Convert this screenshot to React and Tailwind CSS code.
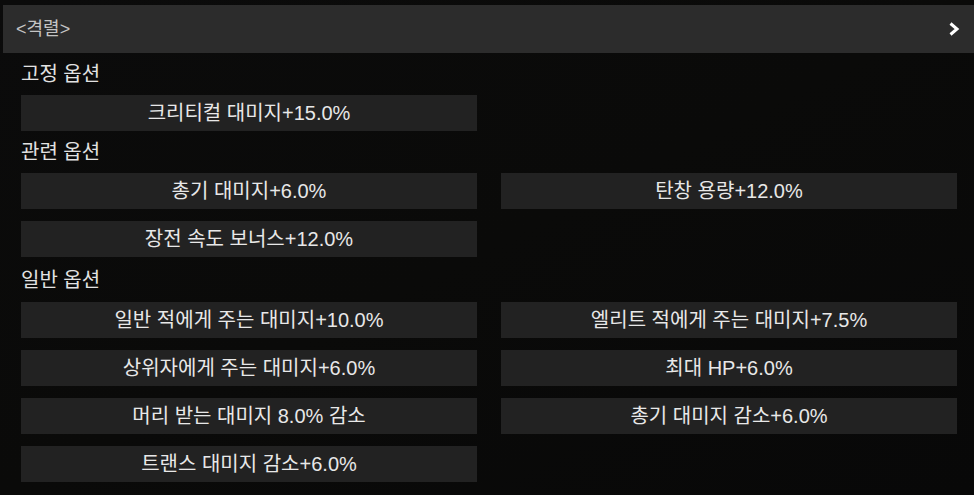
import React from 'react';

const fixedOptions = ['크리티컬 대미지+15.0%'];
const relatedOptions = ['총기 대미지+6.0%', '탄창 용량+12.0%', '장전 속도 보너스+12.0%'];
const normalOptions = [
  '일반 적에게 주는 대미지+10.0%',
  '엘리트 적에게 주는 대미지+7.5%',
  '상위자에게 주는 대미지+6.0%',
  '최대 HP+6.0%',
  '머리 받는 대미지 8.0% 감소',
  '총기 대미지 감소+6.0%',
  '트랜스 대미지 감소+6.0%',
];

const Section = ({ title, items, labelClass }) => (
  <div>
    <div className={`flex items-center text-[20px] text-[#e2e2e2] ${labelClass}`}>{title}</div>
    <div className="grid grid-cols-[456px_456px] gap-x-[24px] gap-y-[12px]">
      {items.map((text) => (
        <div
          key={text}
          className="h-[36px] flex items-center justify-center bg-[#222222] text-[20px] text-[#e8e8e8]"
        >
          {text}
        </div>
      ))}
    </div>
  </div>
);

export default function App() {
  return (
    <div
      className="w-[974px] h-[495px] overflow-hidden bg-gradient-to-br from-[#0b0b0b] via-[#0a0a09] to-[#080808] pt-[5px] pl-[3px]"
      style={{ fontFamily: '"Liberation Sans", "Noto Sans CJK KR", sans-serif' }}
    >
      <div className="h-[48px] flex items-center justify-between bg-[#2c2c2c] pl-[13px] pr-[14px]">
        <span className="text-[18px] text-[#c4c4c4]">&lt;격렬&gt;</span>
        <svg width="12" height="16" viewBox="0 0 12 16" fill="none">
          <path d="M2.5 2.5 L9 8 L2.5 13.5" stroke="#ffffff" strokeWidth="3" strokeLinejoin="miter" />
        </svg>
      </div>
      <div className="pl-[18px]">
        <Section title="고정 옵션" items={fixedOptions} labelClass="h-[42px]" />
        <Section title="관련 옵션" items={relatedOptions} labelClass="h-[42px]" />
        <Section title="일반 옵션" items={normalOptions} labelClass="h-[45px]" />
      </div>
    </div>
  );
}
